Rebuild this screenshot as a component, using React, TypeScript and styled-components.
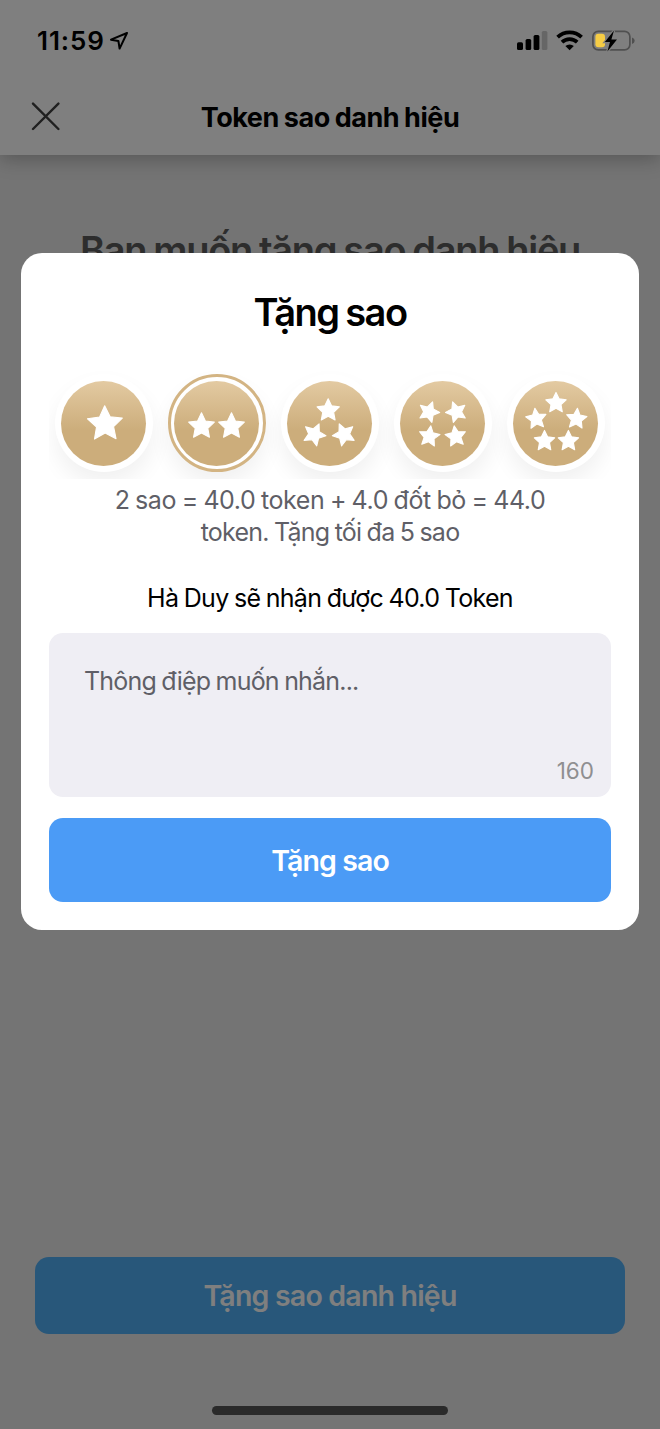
import React from "react";
import styled, { createGlobalStyle } from "styled-components";

const GlobalStyle = createGlobalStyle`
  *, *::before, *::after { box-sizing: border-box; }
  body { margin: 0; font-family: Inter, "Noto Sans", sans-serif; }
  h1, h2, p { margin: 0; }
  button { font: inherit; border: 0; padding: 0; margin: 0; }
`;

const Screen = styled.div`
  position: relative;
  display: flex;
  flex-direction: column;
  width: 660px;
  height: 1429px;
  overflow: hidden;
  background: #e8e8e8;
`;

const Header = styled.header`
  display: flex;
  flex-direction: column;
  justify-content: flex-end;
  height: 155px;
  background: #fff;
  box-shadow: 0 4px 18px rgba(0, 0, 0, 0.26);
`;

const NavBar = styled.div`
  display: grid;
  grid-template-columns: 60px 1fr 60px;
  align-items: center;
  height: 77px;
`;

const CloseButton = styled.button`
  display: flex;
  padding-left: 31px;
  background: none;
`;

const NavTitle = styled.h1`
  padding-top: 2px;
  text-align: center;
  font-size: 27px;
  line-height: 34px;
  font-weight: 700;
  letter-spacing: -0.46px;
  word-spacing: -1px;
  white-space: nowrap;
  color: #000;
`;

const Body = styled.main`
  flex: 1;
  display: flex;
  flex-direction: column;
  justify-content: space-between;
  padding: 72px 35px 95px;
`;

const Question = styled.h2`
  text-align: center;
  font-size: 38px;
  line-height: 46px;
  font-weight: 600;
  letter-spacing: -1.3px;
  word-spacing: -1.2px;
  white-space: nowrap;
  color: #5a5a5a;
`;

const ActionButton = styled.button<{ $height: number; $color: string; $tracking: number }>`
  height: ${(p) => p.$height}px;
  width: 100%;
  border-radius: 14px;
  background: ${(p) => p.$color};
  color: #fff;
  font-size: 28.5px;
  font-weight: 600;
  letter-spacing: ${(p) => p.$tracking}px;
`;

const Overlay = styled.div`
  position: absolute;
  inset: 0;
  display: flex;
  align-items: flex-start;
  justify-content: center;
  padding: 253px 21px 0;
  background: rgba(0, 0, 0, 0.5);
`;

const Dialog = styled.section`
  display: flex;
  flex-direction: column;
  width: 618px;
  height: 677px;
  padding: 36px 28px 28px;
  border-radius: 21px;
  background: #fff;
`;

const DialogTitle = styled.h2`
  text-align: center;
  font-size: 38px;
  line-height: 46px;
  font-weight: 600;
  letter-spacing: -1.5px;
  word-spacing: -1.5px;
  color: #000;
`;

const Choices = styled.div`
  display: flex;
  justify-content: space-between;
  align-items: flex-end;
  height: 109px;
  margin-top: 35px;
  padding: 0 6.5px 7px 5.5px;
  overflow: hidden;
`;

const Choice = styled.button<{ $selected?: boolean }>`
  display: flex;
  align-items: center;
  justify-content: center;
  width: 98px;
  height: 98px;
  border-radius: 50%;
  background: #fff;
  border: ${(p) => (p.$selected ? "3.5px solid #d3b483" : "0")};
  box-shadow: 0 12px 22px rgba(0, 0, 0, 0.06);
`;

const Medal = styled.span`
  display: flex;
  flex: none;
  width: 85px;
  height: 85px;
  border-radius: 50%;
  background: linear-gradient(180deg, #e3caa2 0%, #ccad7b 58%, #ccad7b 100%);
`;

const Details = styled.p`
  margin-top: 6px;
  text-align: center;
  font-size: 25px;
  line-height: 31.5px;
  color: #5f5f67;
`;

const Line = styled.span<{ $tracking: number }>`
  display: block;
  white-space: nowrap;
  letter-spacing: ${(p) => p.$tracking}px;
  word-spacing: -1px;
`;

const Receiver = styled.p`
  margin-top: 34px;
  text-align: center;
  font-size: 25px;
  line-height: 32px;
  letter-spacing: -0.7px;
  word-spacing: -0.9px;
  color: #000;
`;

const MessageBox = styled.div`
  display: flex;
  flex-direction: column;
  justify-content: space-between;
  height: 164px;
  margin-top: auto;
  margin-bottom: 21px;
  padding: 32px 17px 11px 35px;
  border-radius: 14px;
  background: #efeef4;
`;

const Placeholder = styled.span`
  font-size: 25px;
  line-height: 32px;
  letter-spacing: -0.8px;
  word-spacing: -0.9px;
  color: #5f5f67;
`;

const Counter = styled.span`
  align-self: flex-end;
  font-size: 22.5px;
  line-height: 30px;
  color: #8f8f91;
`;

const StatusBar = styled.div`
  position: absolute;
  top: 24px;
  left: 0;
  right: 0;
  display: flex;
  align-items: center;
  height: 34px;
  padding: 0 24px 0 37px;
`;

const Time = styled.span`
  width: 67px;
  white-space: nowrap;
  font-size: 26px;
  line-height: 34px;
  font-weight: 600;
  letter-spacing: 0.9px;
`;

const LocationIcon = styled.svg`
  margin-left: 5px;
  margin-bottom: 1px;
`;

const DeviceIcons = styled.svg`
  margin-left: auto;
  margin-bottom: 2px;
`;

const HomeIndicator = styled.div`
  position: absolute;
  bottom: 14px;
  left: 212px;
  width: 236px;
  height: 9px;
  border-radius: 5px;
  background: #2a2a2a;
`;

type StarSpec = [x: number, y: number, radius: number, angle: number];

const LEVELS: StarSpec[][] = [
  [[1.5, 0.6, 18.8, -1]],
  [[-15, 2.8, 14, 0], [15, 2.8, 14, 0]],
  [[-1.3, -13, 12.2, 0], [-15.2, 11, 12.2, 24], [14.5, 11, 12.2, -24]],
  [[-13.6, -11.5, 11.3, 20], [13.8, -11.5, 11.3, -20], [-13.2, 13, 11.3, 8], [13.2, 13, 11.3, -8]],
  [[0.5, -20.4, 11.2, 0], [-19.3, -4.6, 11.2, -7], [21, -4.6, 11.2, 5], [-11, 17.6, 11.2, 0], [12.9, 17.6, 11.2, 0]],
];

function starPoints(radius: number): string {
  const outer = radius - 0.5;
  return Array.from({ length: 10 }, (_, i) => {
    const r = i % 2 === 0 ? outer : outer * 0.49;
    const a = (i * Math.PI) / 5;
    return `${(r * Math.sin(a)).toFixed(2)},${(-r * Math.cos(a)).toFixed(2)}`;
  }).join(" ");
}

function Stars({ stars }: { stars: StarSpec[] }) {
  return (
    <svg width="85" height="85" viewBox="-42.5 -42.5 85 85">
      {stars.map(([x, y, r, angle], i) => (
        <polygon
          key={i}
          points={starPoints(r)}
          transform={`translate(${x} ${y}) rotate(${angle})`}
          fill="#fff"
          stroke="#fff"
          strokeWidth="1.1"
          strokeLinejoin="round"
        />
      ))}
    </svg>
  );
}

export default function App() {
  return (
    <Screen>
      <GlobalStyle />
      <Header>
        <NavBar>
          <CloseButton aria-label="Đóng">
            <svg width="29" height="29" viewBox="0 0 29 29" fill="none" stroke="#404040" strokeWidth="2.4" strokeLinecap="round">
              <path d="M2 1.6 27.4 27M27.4 1.6 2 27" />
            </svg>
          </CloseButton>
          <NavTitle>Token sao danh hiệu</NavTitle>
        </NavBar>
      </Header>
      <Body>
        <Question>Bạn muốn tặng sao danh hiệu</Question>
        <ActionButton $height={77} $color="#50aef4" $tracking={-0.8}>
          Tặng sao danh hiệu
        </ActionButton>
      </Body>
      <Overlay>
        <Dialog role="dialog">
          <DialogTitle>Tặng sao</DialogTitle>
          <Choices>
            {LEVELS.map((stars, i) => (
              <Choice key={i} $selected={i === 1} aria-label={`${i + 1} sao`}>
                <Medal>
                  <Stars stars={stars} />
                </Medal>
              </Choice>
            ))}
          </Choices>
          <Details>
            <Line $tracking={-0.42}>2 sao = 40.0 token + 4.0 đốt bỏ = 44.0</Line>
            <Line $tracking={-0.76}>token. Tặng tối đa 5 sao</Line>
          </Details>
          <Receiver>Hà Duy sẽ nhận được 40.0 Token</Receiver>
          <MessageBox>
            <Placeholder>Thông điệp muốn nhắn...</Placeholder>
            <Counter>160</Counter>
          </MessageBox>
          <ActionButton $height={84} $color="#4b9bf6" $tracking={-0.9}>
            Tặng sao
          </ActionButton>
        </Dialog>
      </Overlay>
      <StatusBar>
        <Time>11:59</Time>
        <LocationIcon width="20" height="20" viewBox="0 0 20 20" fill="none" stroke="#000" strokeWidth="2" strokeLinejoin="round">
          <path d="M18 2 2 8.7 9.4 10 10.6 17.6Z" />
        </LocationIcon>
        <DeviceIcons width="119" height="24" viewBox="517 28 119 24">
          <rect x="517" y="42.3" width="6" height="7.7" rx="1.6" />
          <rect x="525.6" y="39" width="5.6" height="11" rx="1.6" />
          <rect x="533.6" y="35" width="5.8" height="15" rx="1.6" />
          <rect x="541.8" y="31" width="5.6" height="19" rx="1.6" fill="#666" />
          <g fill="none" stroke="#000" strokeWidth="3.7">
            <path d="M557.6 37.2a17.2 17.2 0 0 1 24 0" />
            <path d="M562 42.1a11 11 0 0 1 15.2 0" />
          </g>
          <path d="M569.6 50.2l-4.2-4.1a6.2 6.2 0 0 1 8.4 0z" />
          <rect x="592.9" y="31.3" width="37" height="18.6" rx="5.4" fill="none" stroke="#505050" strokeWidth="1.7" />
          <path d="M632 37.4q2.7 1 2.7 3.3t-2.7 3.3z" fill="#505050" />
          <rect x="595.4" y="33.8" width="9.6" height="13.4" rx="3" fill="#f6cd45" />
          <path d="M614 30.6 604.8 42h5.2l-2.6 9.4 9.6-12H611.4z" stroke="#808080" strokeWidth="2.4" paintOrder="stroke" />
        </DeviceIcons>
      </StatusBar>
      <HomeIndicator />
    </Screen>
  );
}
